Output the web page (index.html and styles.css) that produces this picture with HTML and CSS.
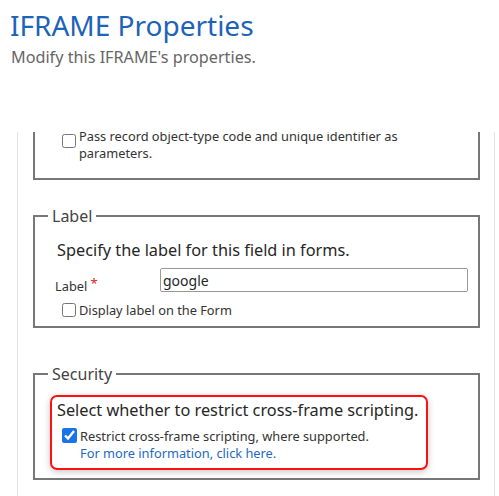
FILE: index.html
```html
<!DOCTYPE html>
<html lang="en">
<head>
<meta charset="utf-8">
<title>IFRAME Properties</title>
<link rel="stylesheet" href="styles.css">
</head>
<body>
<header class="head">
  <h1 class="title">IFRAME Properties</h1>
  <p class="subtitle">Modify this IFRAME's properties.</p>
</header>
<div class="panel">
  <fieldset class="group group-first">
    <label class="check check-pass">
      <input type="checkbox" class="box">
      <span class="check-text wrap">Pass record object-type code and unique identifier as parameters.</span>
    </label>
  </fieldset>

  <fieldset class="group group-label">
    <legend class="legend">Label</legend>
    <p class="intro">Specify the label for this field in forms.</p>
    <div class="field-row">
      <span class="field-label">Label <span class="req">*</span></span>
      <input type="text" class="text-input" value="google">
    </div>
    <label class="check check-display">
      <input type="checkbox" class="box">
      <span class="check-text">Display label on the Form</span>
    </label>
  </fieldset>

  <fieldset class="group group-security">
    <legend class="legend">Security</legend>
    <div class="highlight">
      <p class="intro intro-flush">Select whether to restrict cross-frame scripting.</p>
      <label class="check check-restrict">
        <input type="checkbox" class="box box-big" checked>
        <span class="check-text">Restrict cross-frame scripting, where supported.</span>
      </label>
      <a class="more-link" href="#">For more information, click here.</a>
    </div>
  </fieldset>
</div>
</body>
</html>
```

FILE: styles.css
```css
* { box-sizing: border-box; }

html, body {
  margin: 0;
  padding: 0;
  background: #ffffff;
  font-family: "Noto Sans", "Open Sans", sans-serif;
  color: #333333;
  overflow: hidden;
}

.head {
  height: 132px;
  padding: 7px 0 0 10px;
}

.title {
  margin: 0;
  font-size: 28px;
  line-height: 36px;
  font-weight: 400;
  color: #1d63b8;
}

.subtitle {
  margin: 4px 0 0 1px;
  font-size: 16.2px;
  line-height: 20px;
  color: #666666;
}

.panel {
  margin-left: 17px;
  width: 478px;
  height: 364px;
  border-left: 1px solid #e3e3e3;
  border-right: 1px solid #e3e3e3;
  padding: 0 14px 0 15px;
  overflow: hidden;
}

.group {
  margin: 0;
  padding: 12px 0 7px 0;
  border: 2px solid #777777;
  min-width: 0;
}

.group-first {
  margin-top: -16px;
  padding: 10px 0 16px 0;
}

.group-label {
  margin-top: 26px;
}

.group-security {
  margin-top: 36px;
  padding: 11px 0 8px 0;
}

.legend {
  margin-left: 13px;
  padding: 0 4px;
  font-size: 16px;
  line-height: 20px;
  color: #444444;
}

.intro {
  margin: 0 0 0 22px;
  font-size: 16.3px;
  line-height: 24px;
  color: #262626;
}

.intro-flush {
  margin-left: 0;
}

.check {
  display: flex;
  align-items: flex-start;
  margin-left: 27px;
  font-size: 12.8px;
  line-height: 17px;
  color: #333333;
}

.box {
  flex: none;
  width: 14px;
  height: 14px;
  margin: 0 3px 0 0;
  accent-color: #1a73e8;
}

.check-pass .box { margin-top: 6px; }
.check-display { margin-top: 10px; }
.check-display .box { margin-top: 1px; }

.wrap { max-width: 320px; }

.field-row {
  display: flex;
  align-items: center;
  margin: 6px 0 0 20px;
  height: 24px;
}

.field-label {
  width: 105px;
  flex: none;
  font-size: 12.8px;
  padding-top: 8px;
  color: #333333;
}

.req {
  color: #e0201c;
  font-size: 13px;
  vertical-align: 3px;
}

.text-input {
  width: 308px;
  height: 24px;
  border: 1px solid #999999;
  border-radius: 2px;
  padding: 0 2px;
  font-family: "Noto Sans", "Open Sans", sans-serif;
  font-size: 14px;
  color: #262626;
  outline: none;
}

.highlight {
  margin-left: 15px;
  width: 378px;
  border: 2px solid #ff1010;
  border-radius: 7px;
  padding: 1px 5px 6px 5px;
  box-shadow: 0 2px 7px rgba(0, 0, 0, 0.22);
}

.check-restrict {
  margin: 6px 0 0 5px;
}

.box-big {
  width: 15px;
  height: 15px;
}

.more-link {
  display: block;
  margin-left: 23px;
  font-size: 12.8px;
  line-height: 17px;
  color: #1d6ac0;
  text-decoration: none;
}
```
